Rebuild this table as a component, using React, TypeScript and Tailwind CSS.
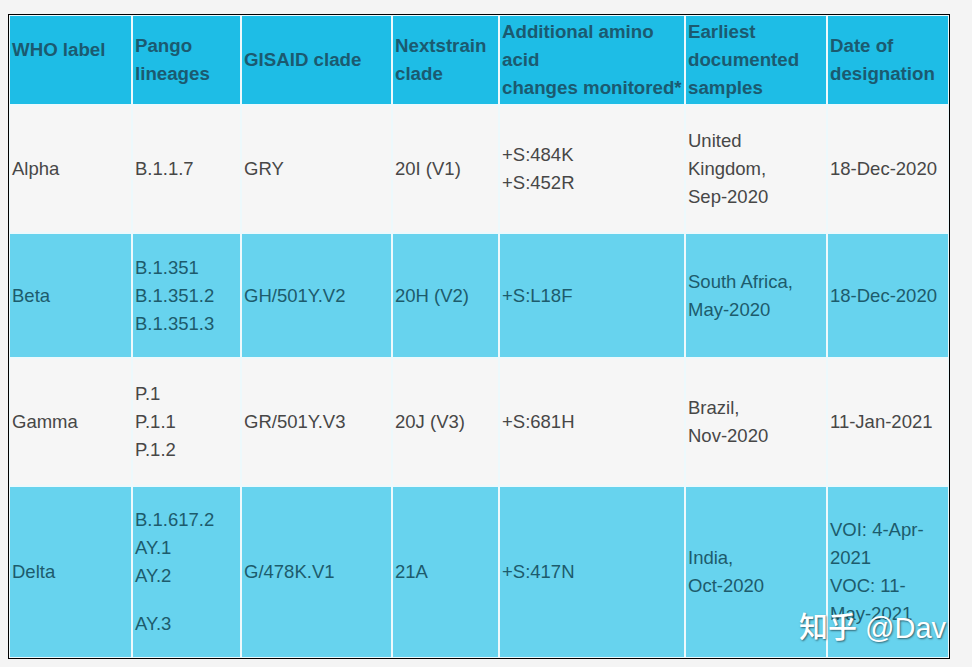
import React from "react";

type Row = {
  tone: "head" | "light" | "blue";
  height: string;
  cells: { lines: string[]; extraGapAt?: number; lift?: boolean }[];
};

const rows: Row[] = [
  {
    tone: "head",
    height: "h-[88px]",
    cells: [
      { lines: ["WHO label"], lift: true },
      { lines: ["Pango", "lineages"] },
      { lines: ["GISAID clade"] },
      { lines: ["Nextstrain", "clade"] },
      { lines: ["Additional amino", "acid", "changes monitored*"] },
      { lines: ["Earliest", "documented", "samples"] },
      { lines: ["Date of", "designation"] },
    ],
  },
  {
    tone: "light",
    height: "h-[126px]",
    cells: [
      { lines: ["Alpha"] },
      { lines: ["B.1.1.7"] },
      { lines: ["GRY"] },
      { lines: ["20I (V1)"] },
      { lines: ["+S:484K", "+S:452R"] },
      { lines: ["United", "Kingdom,", "Sep-2020"] },
      { lines: ["18-Dec-2020"] },
    ],
  },
  {
    tone: "blue",
    height: "h-[123px]",
    cells: [
      { lines: ["Beta"] },
      { lines: ["B.1.351", "B.1.351.2", "B.1.351.3"] },
      { lines: ["GH/501Y.V2"] },
      { lines: ["20H (V2)"] },
      { lines: ["+S:L18F"] },
      { lines: ["South Africa,", "May-2020"] },
      { lines: ["18-Dec-2020"] },
    ],
  },
  {
    tone: "light",
    height: "h-[126px]",
    cells: [
      { lines: ["Gamma"] },
      { lines: ["P.1", "P.1.1", "P.1.2"] },
      { lines: ["GR/501Y.V3"] },
      { lines: ["20J (V3)"] },
      { lines: ["+S:681H"] },
      { lines: ["Brazil,", "Nov-2020"] },
      { lines: ["11-Jan-2021"] },
    ],
  },
  {
    tone: "blue",
    height: "h-[170px]",
    cells: [
      { lines: ["Delta"] },
      { lines: ["B.1.617.2", "AY.1", "AY.2", "AY.3"], extraGapAt: 3 },
      { lines: ["G/478K.V1"] },
      { lines: ["21A"] },
      { lines: ["+S:417N"] },
      { lines: ["India,", "Oct-2020"] },
      { lines: ["VOI: 4-Apr-", "2021", "VOC: 11-", "May-2021"] },
    ],
  },
];

const toneClass = {
  head: "bg-[#1ebde6] text-[#1b5a70] font-bold text-[18.7px]",
  light: "bg-[#f6f6f6] text-[#474747] text-[18.5px]",
  blue: "bg-[#67d3ee] text-[#1d5b6c] text-[18.5px]",
};

export default function App() {
  return (
    <div
      className="relative w-[972px] h-[667px] overflow-hidden bg-[#f4f4f4]"
      style={{ fontFamily: '"Liberation Sans", Arial, sans-serif' }}
    >
      <div className="ml-[8px] mt-[14px] w-fit border border-black bg-[#edf9fc] p-[1px]">
        <div className="grid grid-cols-[121px_107px_149px_105px_184px_140px_120px] gap-[2px]">
          {rows.map((row, ri) =>
            row.cells.map((cell, ci) => (
              <div
                key={`${ri}-${ci}`}
                className={`flex items-center pl-[2px] leading-[28px] whitespace-nowrap ${row.height} ${toneClass[row.tone]} ${cell.lift ? "pb-[20px]" : ""}`}
              >
                <div>
                  {cell.lines.map((l, li) => (
                    <div key={li} className={cell.extraGapAt === li ? "mt-[20px]" : ""}>
                      {l}
                    </div>
                  ))}
                </div>
              </div>
            ))
          )}
        </div>
      </div>

      {/* watermark */}
      <div
        className="absolute left-[799px] top-[611px] text-[29px] leading-[34px] font-medium text-white whitespace-nowrap [text-shadow:1px_1px_2px_rgba(0,0,0,0.55)]"
        style={{ fontFamily: '"Liberation Sans", "Noto Sans CJK SC", sans-serif' }}
      >
        知乎 @Dav
      </div>
    </div>
  );
}
